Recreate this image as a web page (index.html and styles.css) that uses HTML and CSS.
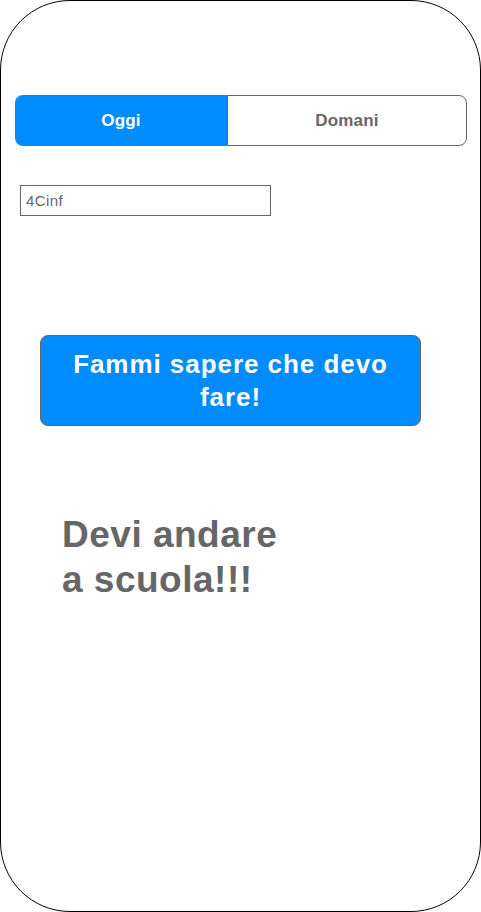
FILE: index.html
```html
<!DOCTYPE html>
<html lang="it">
<head>
<meta charset="utf-8">
<title>Scuola</title>
<link rel="stylesheet" href="styles.css">
</head>
<body>
<div class="phone">
  <div class="segmented">
    <div class="seg seg-active">Oggi</div>
    <div class="seg seg-inactive">Domani</div>
  </div>
  <div class="field">4Cinf</div>
  <div class="action">Fammi sapere che devo<br>fare!</div>
  <div class="result">Devi andare<br>a scuola!!!</div>
</div>
</body>
</html>
```
FILE: styles.css
```css
html, body {
  margin: 0;
  padding: 0;
  background: #fff;
}
body {
  font-family: "Liberation Sans", Arial, Helvetica, sans-serif;
}
.phone {
  box-sizing: border-box;
  width: 481px;
  height: 912px;
  border: 1px solid #000;
  border-radius: 70px;
  display: flex;
  flex-direction: column;
  padding: 94px 14px 0 14px;
}
.segmented {
  display: flex;
  height: 51px;
  width: 452px;
}
.seg {
  box-sizing: border-box;
  display: flex;
  align-items: center;
  justify-content: center;
  font-weight: bold;
  font-size: 17px;
  letter-spacing: 0.2px;
  padding-top: 1px;
}
.seg-active {
  width: 212px;
  background: #008cff;
  color: #fff;
  border-radius: 8px 0 0 8px;
}
.seg-inactive {
  flex: 1;
  border: 1px solid #666;
  border-radius: 0 8px 8px 0;
  color: #666;
}
.field {
  box-sizing: border-box;
  margin: 39px 0 0 5px;
  width: 251px;
  height: 31px;
  border: 1px solid #666;
  font-size: 15px;
  letter-spacing: 0.4px;
  color: #666;
  padding: 6px 0 0 5px;
}
.action {
  box-sizing: border-box;
  margin: 119px 0 0 25px;
  width: 381px;
  height: 91px;
  background: #008cff;
  border: 1px solid #666;
  border-radius: 8px;
  color: #fff;
  font-weight: bold;
  font-size: 26px;
  letter-spacing: 0.95px;
  line-height: 33px;
  text-align: center;
  padding-top: 12px;
}
.result {
  margin: 86px 0 0 47px;
  font-weight: bold;
  font-size: 37px;
  letter-spacing: 0.5px;
  line-height: 45px;
  color: #666;
}
```
